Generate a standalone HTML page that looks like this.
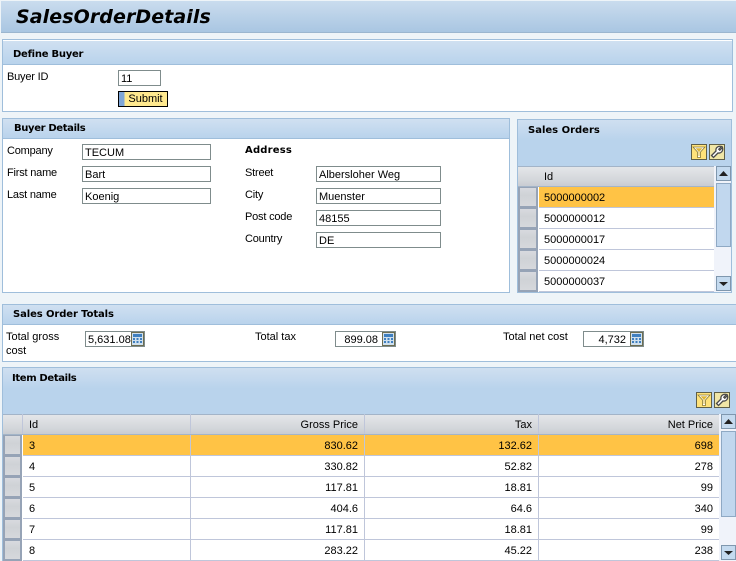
<!DOCTYPE html>
<html><head><meta charset="utf-8"><style>
html,body{margin:0;padding:0;background:#fff}
#p{position:relative;width:736px;height:561px;overflow:hidden;background:#eef4f8;font:11px/14px "Liberation Sans",sans-serif;color:#000}
#p div{position:absolute;box-sizing:border-box}
.h{background:linear-gradient(#d0e0f1,#b9d3ec);}
.t{white-space:nowrap;height:14px;margin-top:1px}
.b{font:bold 10px/14px "DejaVu Sans",sans-serif;white-space:nowrap;margin-top:1px}
.pn{background:#fff;border:1px solid #9fbedb}
.i{background:#fff;border:1px solid #7f8c8c;height:16px;padding:1px 0 0 2px;line-height:14px;white-space:nowrap}
.sel{background:linear-gradient(#d8dadf,#cfd2d6 40%,#d6d8dc);border:2px solid #96a3b6;border-top:1px solid #96a3b6}
.row{background:#fff;border-bottom:1px solid #bfc6da;height:21px;line-height:23px}
.hd{background:linear-gradient(#e4e6e9,#d3d6da 70%,#c8ccd2);border-top:1px solid #a3b4c8;border-bottom:1px solid #a3b4c8;height:21px;line-height:23px}
.c{border-right:1px solid #bfc6da;height:100%;padding:0 6px;top:0}
.r{text-align:right}
.sb{background:#f0f3fa}
.ar{background:#c4daef;border:1px solid #7f97ae}
.th{background:#c1d7ee;border:1px solid #8fa9c4}
.ib{background:#ffe27a;border:1px solid #5f5f48;width:16px;height:16px}
.ib2{background:#f0e6a6}
svg{position:absolute;left:0;top:0}
</style></head><body><div id="p">

<div style="left:1px;top:1px;width:735px;height:32px;background:linear-gradient(#cadcee,#a9c6e2);border-bottom:1px solid #9bb6cf"></div>
<div class="b" style="left:16px;top:4px;font-size:19px;line-height:24px;font-style:italic;letter-spacing:.08px">SalesOrderDetails</div>

<div class="pn" style="left:2px;top:39px;width:731px;height:73px"></div>
<div class="h" style="left:3px;top:41px;width:729px;height:24px;border-bottom:1px solid #9fbedb"></div>
<div class="b" style="left:13px;top:47px;letter-spacing:-.25px">Define Buyer</div>
<div class="t" style="left:7px;top:69px;letter-spacing:-.2px">Buyer ID</div>
<div class="i" style="left:118px;top:70px;width:43px">11</div>
<div style="left:118px;top:91px;width:50px;height:16px;border:1px solid #000;background:linear-gradient(90deg,#7fa6d8 0,#7fa6d8 5px,#ffe98f 6px,#ffe98f);text-align:center;line-height:15px;padding-left:5px">Submit</div>

<div class="pn" style="left:2px;top:118px;width:508px;height:175px"></div>
<div class="h" style="left:3px;top:119px;width:506px;height:20px;border-bottom:1px solid #9fbedb"></div>
<div class="b" style="left:14px;top:121px;letter-spacing:-.35px">Buyer Details</div>
<div class="t" style="left:7px;top:143px;letter-spacing:-.2px">Company</div>
<div class="t" style="left:7px;top:165px;letter-spacing:-.2px">First name</div>
<div class="t" style="left:7px;top:187px;letter-spacing:-.2px">Last name</div>
<div class="i" style="left:82px;top:144px;width:129px">TECUM</div>
<div class="i" style="left:82px;top:166px;width:129px">Bart</div>
<div class="i" style="left:82px;top:188px;width:129px">Koenig</div>
<div class="b" style="left:245px;top:143px;letter-spacing:.2px">Address</div>
<div class="t" style="left:245px;top:165px;letter-spacing:-.2px">Street</div>
<div class="t" style="left:245px;top:187px;letter-spacing:-.2px">City</div>
<div class="t" style="left:245px;top:209px;letter-spacing:-.2px">Post code</div>
<div class="t" style="left:245px;top:231px;letter-spacing:-.2px">Country</div>
<div class="i" style="left:316px;top:166px;width:125px">Albersloher Weg</div>
<div class="i" style="left:316px;top:188px;width:125px">Muenster</div>
<div class="i" style="left:316px;top:210px;width:125px">48155</div>
<div class="i" style="left:316px;top:232px;width:125px">DE</div>

<!-- Sales Orders -->
<div class="pn" style="left:517px;top:119px;width:215px;height:174px"></div>
<div style="left:518px;top:120px;width:213px;height:46px;background:linear-gradient(#cfdff0,#b9d3ec 45%,#b9d3ec)"></div>
<div class="b" style="left:528px;top:123px">Sales Orders</div>
<div class="ib" style="left:691px;top:144px"><svg width="14" height="14" viewBox="0 0 14 14"><path d="M1 2H13L8.500 7V12.500H5.500V7Z" fill="#fff" stroke="#8a7a30" stroke-width=".8"/><path d="M3.500 3.200H10.500L7.500 6.500V11H6.500V6.500Z" fill="#e0b838"/></svg></div>
<div class="ib ib2" style="left:709px;top:144px"><svg width="14" height="14" viewBox="0 0 14 14"><path d="M1.500 10.500L6 6C5.300 3 8 .5 11.500 1.500L8.800 4.200L9.800 5.200L12.500 2.500C13.500 6 11 8.500 8 8L3.500 12.500Z" fill="#fff" stroke="#4a4a4a" stroke-width="1.300"/></svg></div>
<div class="hd" style="left:518px;top:166px;width:198px"><div class="c" style="left:20px;width:178px;border:0;padding-left:6px;top:-1px">Id</div></div>
<div class="sel" style="left:518px;top:187px;width:20px;height:21px"></div>
<div class="sel" style="left:518px;top:208px;width:20px;height:21px"></div>
<div class="sel" style="left:518px;top:229px;width:20px;height:21px"></div>
<div class="sel" style="left:518px;top:250px;width:20px;height:21px"></div>
<div class="sel" style="left:518px;top:271px;width:20px;height:21px"></div>
<div class="row" style="left:539px;top:187px;width:175px;background:#ffc345;padding-left:5px">5000000002</div>
<div class="row" style="left:539px;top:208px;width:175px;padding-left:5px">5000000012</div>
<div class="row" style="left:539px;top:229px;width:175px;padding-left:5px">5000000017</div>
<div class="row" style="left:539px;top:250px;width:175px;padding-left:5px">5000000024</div>
<div class="row" style="left:539px;top:271px;width:175px;padding-left:5px">5000000037</div>
<div class="sb" style="left:714px;top:166px;width:17px;height:126px"></div>
<div class="ar" style="left:716px;top:166px;width:15px;height:15px"><svg width="13" height="13"><path d="M2 9H11L6.500 4Z" fill="#222"/></svg></div>
<div class="th" style="left:716px;top:183px;width:15px;height:64px"></div>
<div class="ar" style="left:716px;top:276px;width:15px;height:15px"><svg width="13" height="13"><path d="M2 5H11L6.500 9Z" fill="#222"/></svg></div>

<!-- Totals -->
<div class="pn" style="left:2px;top:304px;width:734px;height:58px;border-right:0"></div>
<div class="h" style="left:3px;top:305px;width:733px;height:20px;border-bottom:1px solid #9fbedb"></div>
<div class="b" style="left:13px;top:307px;letter-spacing:-.1px">Sales Order Totals</div>
<div class="t" style="left:6px;top:329px">Total gross</div>
<div class="t" style="left:6px;top:343px">cost</div>
<div class="t" style="left:255px;top:329px">Total tax</div>
<div class="t" style="left:503px;top:329px">Total net cost</div>
<div class="i" style="left:85px;top:331px;width:60px">5,631.08</div>
<div class="i r" style="left:335px;top:331px;width:61px;padding-right:17px">899.08</div>
<div class="i r" style="left:583px;top:331px;width:61px;padding-right:17px">4,732</div>
<div style="left:131px;top:332px;width:13px;height:14px"><svg width="13" height="14"><rect x=".5" y=".5" width="12" height="13" fill="#cfe0ee" stroke="#6d6d50"/><rect x="2" y="2" width="9" height="3" fill="#3f7fbf"/><path d="M2 6h2v2H2zM5.500 6h2v2h-2zM9 6h2v2H9zM2 9h2v2H2zM5.500 9h2v2h-2zM9 9h2v2H9z" fill="#3f7fbf"/></svg></div>
<div style="left:382px;top:332px;width:13px;height:14px"><svg width="13" height="14"><rect x=".5" y=".5" width="12" height="13" fill="#cfe0ee" stroke="#6d6d50"/><rect x="2" y="2" width="9" height="3" fill="#3f7fbf"/><path d="M2 6h2v2H2zM5.500 6h2v2h-2zM9 6h2v2H9zM2 9h2v2H2zM5.500 9h2v2h-2zM9 9h2v2H9z" fill="#3f7fbf"/></svg></div>
<div style="left:630px;top:332px;width:13px;height:14px"><svg width="13" height="14"><rect x=".5" y=".5" width="12" height="13" fill="#cfe0ee" stroke="#6d6d50"/><rect x="2" y="2" width="9" height="3" fill="#3f7fbf"/><path d="M2 6h2v2H2zM5.500 6h2v2h-2zM9 6h2v2H9zM2 9h2v2H2zM5.500 9h2v2h-2zM9 9h2v2H9z" fill="#3f7fbf"/></svg></div>

<!-- Items -->
<div class="pn" style="left:2px;top:367px;width:734px;height:194px;border-right:0;border-bottom:0"></div>
<div style="left:3px;top:368px;width:733px;height:46px;background:linear-gradient(#cfdff0,#b9d3ec 45%,#b9d3ec)"></div>
<div class="b" style="left:12px;top:371px;letter-spacing:-.35px">Item Details</div>
<div class="ib" style="left:696px;top:392px"><svg width="14" height="14" viewBox="0 0 14 14"><path d="M1 2H13L8.500 7V12.500H5.500V7Z" fill="#fff" stroke="#8a7a30" stroke-width=".8"/><path d="M3.500 3.200H10.500L7.500 6.500V11H6.500V6.500Z" fill="#e0b838"/></svg></div>
<div class="ib ib2" style="left:714px;top:392px"><svg width="14" height="14" viewBox="0 0 14 14"><path d="M1.500 10.500L6 6C5.300 3 8 .5 11.500 1.500L8.800 4.200L9.800 5.200L12.500 2.500C13.500 6 11 8.500 8 8L3.500 12.500Z" fill="#fff" stroke="#4a4a4a" stroke-width="1.300"/></svg></div>

<div class="hd" style="left:3px;top:414px;width:717px">
 <div class="c" style="left:19px;width:169px;border-left:1px solid #bfc6da;top:-1px;height:20px">Id</div>
 <div class="c r" style="left:188px;width:174px;top:-1px;height:20px">Gross Price</div>
 <div class="c r" style="left:362px;width:174px;top:-1px;height:20px">Tax</div>
 <div class="c r" style="left:536px;width:180px;border:0;top:-1px">Net Price</div>
</div>
<div class="sel" style="left:3px;top:435px;width:19px;height:21px"></div>
<div class="sel" style="left:3px;top:456px;width:19px;height:21px"></div>
<div class="sel" style="left:3px;top:477px;width:19px;height:21px"></div>
<div class="sel" style="left:3px;top:498px;width:19px;height:21px"></div>
<div class="sel" style="left:3px;top:519px;width:19px;height:21px"></div>
<div class="sel" style="left:3px;top:540px;width:19px;height:21px"></div>

<div class="row" style="left:23px;top:435px;width:696px;background:#ffc345"><div class="c" style="left:0;width:168px">3</div><div class="c r" style="left:168px;width:174px">830.62</div><div class="c r" style="left:342px;width:174px">132.62</div><div class="c r" style="left:516px;width:180px;border:0">698</div></div>
<div class="row" style="left:23px;top:456px;width:696px"><div class="c" style="left:0;width:168px">4</div><div class="c r" style="left:168px;width:174px">330.82</div><div class="c r" style="left:342px;width:174px">52.82</div><div class="c r" style="left:516px;width:180px;border:0">278</div></div>
<div class="row" style="left:23px;top:477px;width:696px"><div class="c" style="left:0;width:168px">5</div><div class="c r" style="left:168px;width:174px">117.81</div><div class="c r" style="left:342px;width:174px">18.81</div><div class="c r" style="left:516px;width:180px;border:0">99</div></div>
<div class="row" style="left:23px;top:498px;width:696px"><div class="c" style="left:0;width:168px">6</div><div class="c r" style="left:168px;width:174px">404.6</div><div class="c r" style="left:342px;width:174px">64.6</div><div class="c r" style="left:516px;width:180px;border:0">340</div></div>
<div class="row" style="left:23px;top:519px;width:696px"><div class="c" style="left:0;width:168px">7</div><div class="c r" style="left:168px;width:174px">117.81</div><div class="c r" style="left:342px;width:174px">18.81</div><div class="c r" style="left:516px;width:180px;border:0">99</div></div>
<div class="row" style="left:23px;top:540px;width:696px"><div class="c" style="left:0;width:168px">8</div><div class="c r" style="left:168px;width:174px">283.22</div><div class="c r" style="left:342px;width:174px">45.22</div><div class="c r" style="left:516px;width:180px;border:0">238</div></div>

<div class="sb" style="left:719px;top:414px;width:17px;height:147px"></div>
<div class="ar" style="left:721px;top:414px;width:15px;height:15px"><svg width="13" height="13"><path d="M2 9H11L6.500 4Z" fill="#222"/></svg></div>
<div class="th" style="left:721px;top:431px;width:15px;height:86px"></div>
<div class="ar" style="left:721px;top:545px;width:15px;height:15px"><svg width="13" height="13"><path d="M2 5H11L6.500 9Z" fill="#222"/></svg></div>
</div></body></html>
